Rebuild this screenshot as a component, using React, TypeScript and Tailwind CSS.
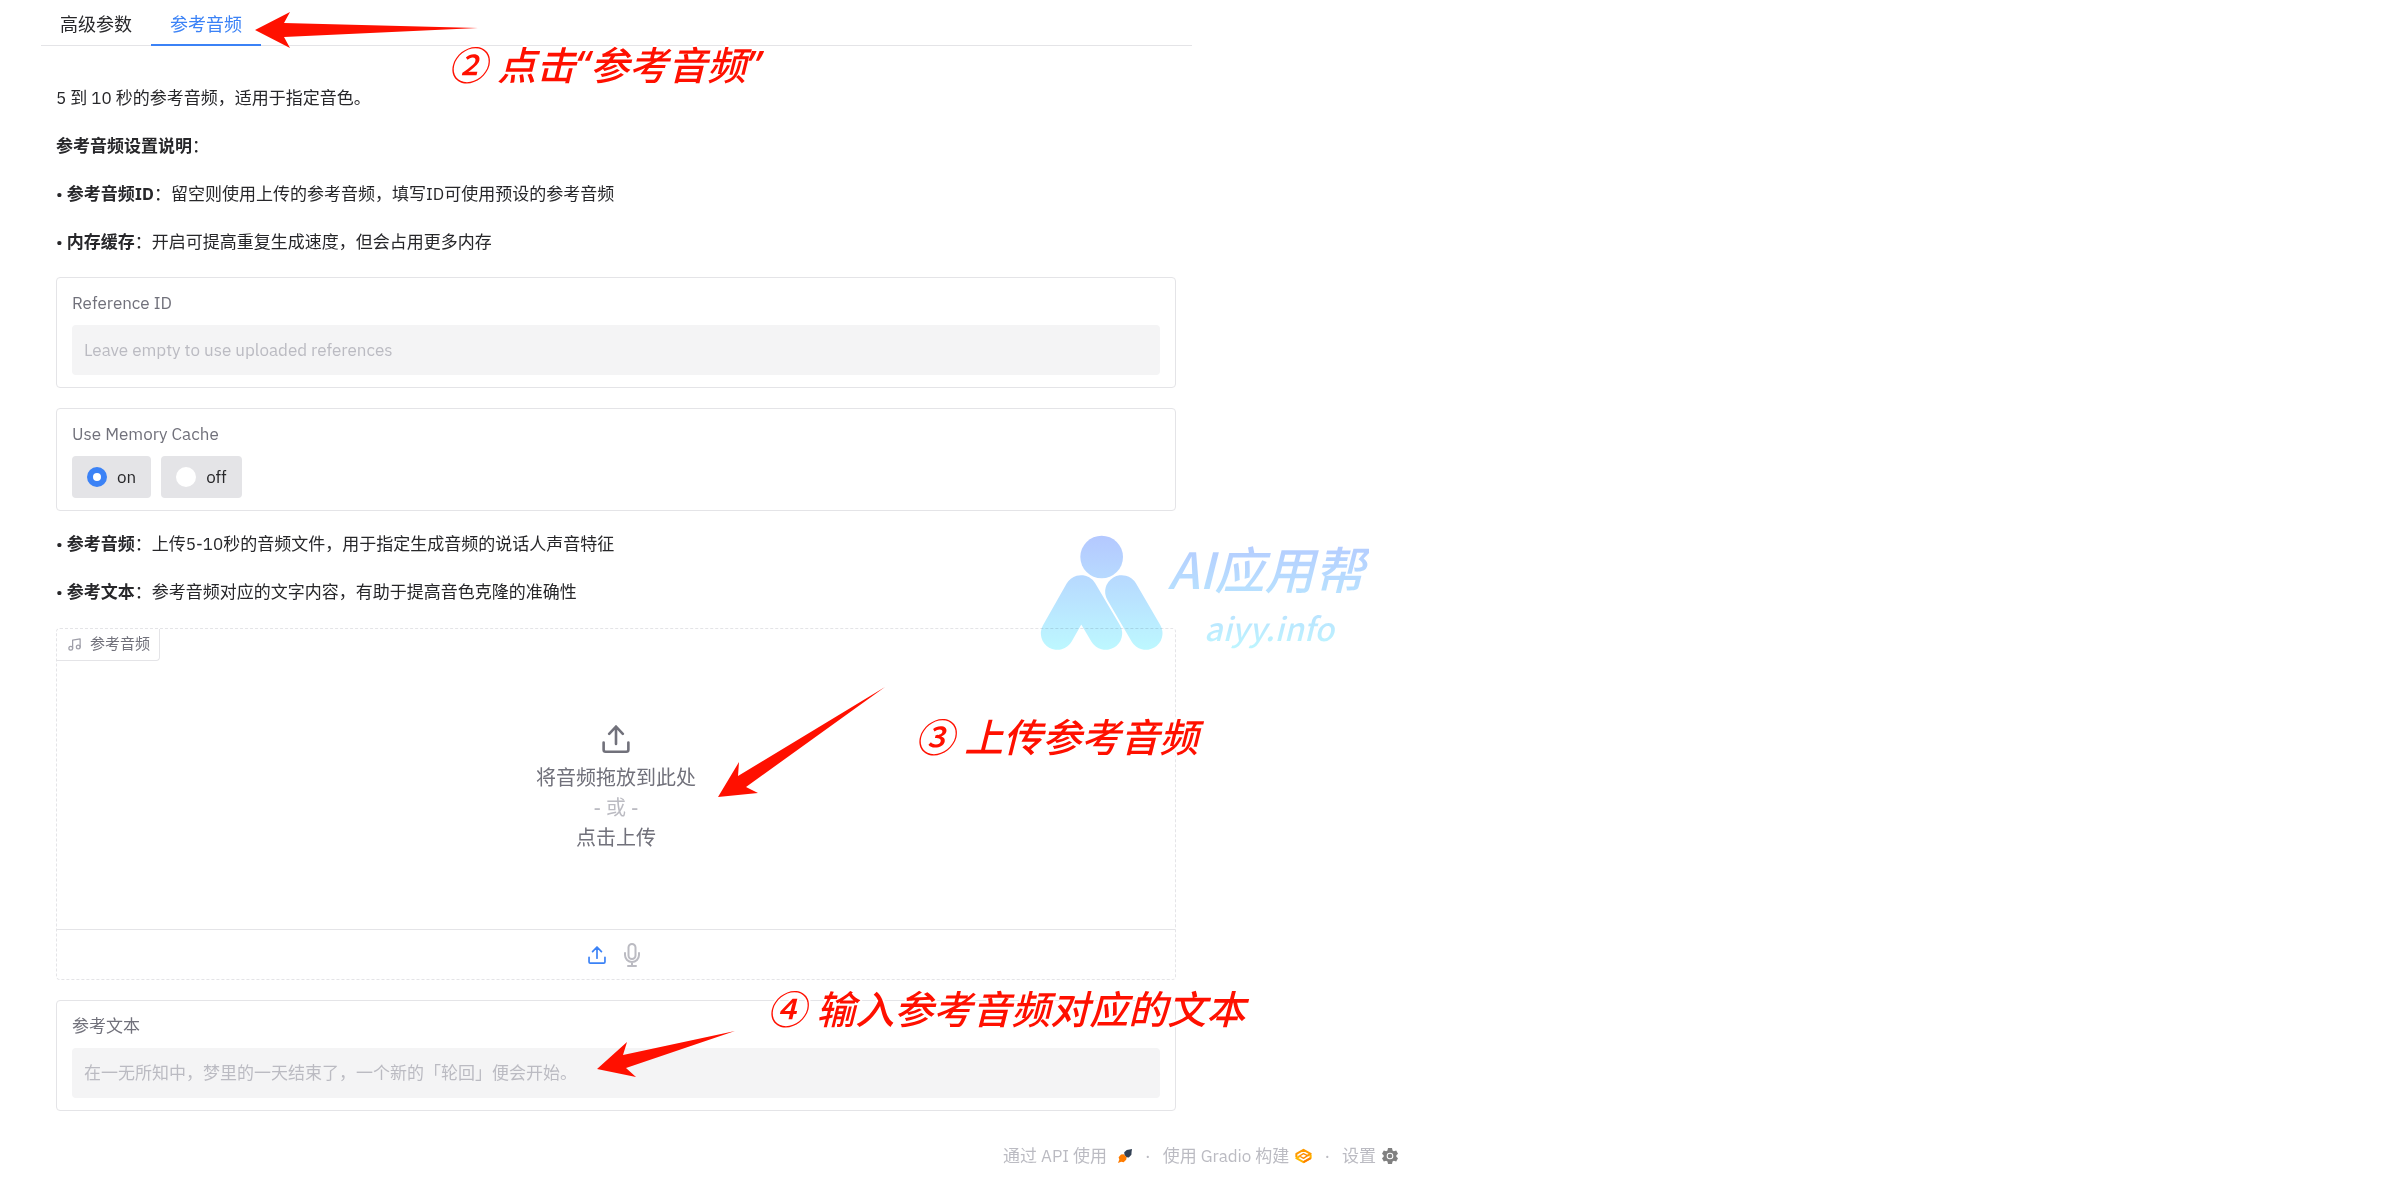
import { useState } from "react";
import type { ReactNode } from "react";

function UploadIcon({ className }: { className: string }) {
  return (
    <svg className={className} viewBox="0 0 84 86" fill="none" stroke="currentColor" strokeWidth="8" strokeLinecap="round" strokeLinejoin="round" aria-hidden="true">
      <path d="M4 54v22a6 6 0 0 0 6 6h64a6 6 0 0 0 6-6V54" />
      <path d="M42 5v53M21 27 42 5l21 22" />
    </svg>
  );
}

function MicIcon({ className }: { className: string }) {
  return (
    <svg className={className} viewBox="0 0 24 24" fill="none" stroke="currentColor" strokeWidth="2" strokeLinecap="round" strokeLinejoin="round" aria-hidden="true">
      <path d="M12 1a3.500 3.500 0 0 0-3.500 3.500v8a3.500 3.500 0 0 0 7 0v-8A3.500 3.500 0 0 0 12 1z" />
      <path d="M19 10v2a7 7 0 0 1-14 0v-2M12 19v4M8 23h8" />
    </svg>
  );
}

function MusicIcon() {
  return (
    <svg className="h-[15px] w-[15px] text-zinc-400" viewBox="0 0 24 24" fill="none" stroke="currentColor" strokeWidth="2" strokeLinecap="round" strokeLinejoin="round" aria-hidden="true">
      <path d="M9 18V5l12-2v13" />
      <circle cx="6" cy="18" r="3" />
      <circle cx="18" cy="16" r="3" />
    </svg>
  );
}

function RocketIcon() {
  return (
    <svg className="h-4 w-4" viewBox="0 0 16 16" aria-hidden="true">
      <path d="M15 1c-.9 0-1.700.2-2.400.6L9.800 2 7.200 4.300 7.500 7l2 2.200 2.300.2 2.600-2.600.2-3z" fill="#334155" />
      <path d="M6.600 6.200 4 6.400 1.600 9.200l.7 2.200L1 15l3.200-1.200 2.400.4 2.600-2.400.4-2.600z" fill="#ff7c00" />
    </svg>
  );
}

function GradioIcon() {
  return (
    <svg className="h-4 w-[17px]" viewBox="0 0 50 44" fill="none" strokeLinejoin="round" aria-hidden="true">
      <path d="M4 25V16L25 4l21 12-9 5" stroke="#ff9a00" strokeWidth="6" />
      <path d="M46 19v9L25 40 4 28l9-5" stroke="#ffb800" strokeWidth="6" />
      <path d="M37 21 25 15l-12 7 12 7z" stroke="#ff8c00" strokeWidth="4" />
      <path d="M46 28 25 40" stroke="#ff7c00" strokeWidth="6" />
    </svg>
  );
}

function GearIcon() {
  return (
    <svg className="h-4 w-4" viewBox="0 0 24 24" fill="#808080" fillRule="evenodd" aria-hidden="true">
      <path d="M9 0h6l.8 3.600 2 1.200L21.300 3.700 24 8.600 21.500 11v2l2.500 2.400-2.700 4.900-3.500-1.100-2 1.200L15 24H9l-.8-3.600-2-1.200-3.500 1.100L0 15.400 2.500 13v-2L0 8.600l2.700-4.900 3.500 1.100 2-1.200zM12 7a5 5 0 1 0 0 10 5 5 0 0 0 0-10z" />
      <circle cx="12" cy="12" r="3.500" />
    </svg>
  );
}

function Card({ children }: { children: ReactNode }) {
  return <div className="rounded border border-zinc-200 bg-white px-[15px] pt-[15px] pb-3">{children}</div>;
}

function TextField({ id, label, placeholder }: { id: string; label: string; placeholder: string }) {
  return (
    <Card>
      <label htmlFor={id} className="mb-3 block leading-5 text-zinc-500">{label}</label>
      <input id={id} type="text" placeholder={placeholder} className="block h-[50px] w-full rounded bg-[#f4f4f5] px-3 text-zinc-800 outline-none placeholder:text-[#bbbbc2]" />
    </Card>
  );
}

function CacheOption({ value, checked, onSelect }: { value: string; checked: boolean; onSelect: () => void }) {
  return (
    <label className="flex h-[42px] items-center gap-[10px] rounded bg-zinc-200 px-[15px] text-zinc-800">
      <input type="radio" name="memory-cache" value={value} checked={checked} onChange={onSelect} className="h-5 w-5 appearance-none rounded-full border-0 bg-white checked:border-[6px] checked:border-[#3b82f6]" />
      <span className="leading-5">{value}</span>
    </label>
  );
}

function Note({ children }: { children: ReactNode }) {
  return <p className="leading-[26px] text-zinc-800">{children}</p>;
}

function Annotation({ className, children }: { className: string; children: ReactNode }) {
  return (
    <p className={`pointer-events-none absolute font-['Noto_Sans','Noto_Sans_CJK_SC',sans-serif] text-[39px] leading-[50px] font-medium whitespace-nowrap text-[#ff1000] italic [text-shadow:2px_0_#fff,-2px_0_#fff,0_2px_#fff,0_-2px_#fff] ${className}`}>
      {children}
    </p>
  );
}

function Watermark() {
  return (
    <div className="pointer-events-none absolute top-[534px] left-[1040px] flex mix-blend-multiply">
      <svg className="h-[116px] w-[124px]" viewBox="0 0 372 348" fill="none" aria-hidden="true">
        <defs>
          <linearGradient id="mark" gradientUnits="userSpaceOnUse" x1="0" y1="6" x2="0" y2="348">
            <stop offset="0" stopColor="#b4c8ff" />
            <stop offset="1" stopColor="#bdf8ff" />
          </linearGradient>
        </defs>
        <circle cx="185" cy="69" r="64" fill="url(#mark)" />
        <path d="M52 298 123 173 197 298M245 173 318 298" stroke="url(#mark)" strokeWidth="99" strokeLinecap="round" strokeLinejoin="round" />
      </svg>
      <div className="flex flex-col font-['Noto_Sans_CJK_SC',sans-serif] font-medium italic">
        <span className="bg-linear-to-b from-[#b4c8ff] to-[#b8e4ff] bg-clip-text px-1 text-[50px] leading-[66px] text-transparent">AI应用帮</span>
        <span className="bg-linear-to-b from-[#b8dcff] to-[#bdf8ff] bg-clip-text pl-10 text-[32px] leading-[54px] text-transparent">aiyy.info</span>
      </div>
    </div>
  );
}

export default function App() {
  const [cache, setCache] = useState("on");
  return (
    <div className="relative overflow-hidden bg-white font-['IBM_Plex_Sans','Noto_Sans_CJK_SC',sans-serif] text-[17px] text-zinc-800">
      <main className="grid grid-cols-2 gap-[17px] px-[41px]">
        <section>
          <div role="tablist" className="flex h-[46px] border-b border-zinc-200 text-[18px]">
            <button role="tab" aria-selected="false" className="w-[110px] pt-1">高级参数</button>
            <button role="tab" aria-selected="true" className="-mb-px w-[110px] border-b-2 border-[#3b82f6] pt-1 text-[#3b82f6]">参考音频</button>
          </div>
          <div className="flex flex-col gap-5 pt-[39px] pr-4 pl-[15px]">
            <div className="flex flex-col gap-[22px] pb-[2px]">
              <Note>5 到 10 秒的参考音频，适用于指定音色。</Note>
              <Note><strong>参考音频设置说明</strong>：</Note>
              <Note>• <strong>参考音频ID</strong>：留空则使用上传的参考音频，填写ID可使用预设的参考音频</Note>
              <Note>• <strong>内存缓存</strong>：开启可提高重复生成速度，但会占用更多内存</Note>
            </div>
            <TextField id="reference-id" label="Reference ID" placeholder="Leave empty to use uploaded references" />
            <Card>
              <fieldset>
                <legend className="mb-3 leading-5 text-zinc-500">Use Memory Cache</legend>
                <div className="flex gap-[10px]">
                  <CacheOption value="on" checked={cache === "on"} onSelect={() => setCache("on")} />
                  <CacheOption value="off" checked={cache === "off"} onSelect={() => setCache("off")} />
                </div>
              </fieldset>
            </Card>
            <div className="flex flex-col gap-[22px] pb-[3px]">
              <Note>• <strong>参考音频</strong>：上传5-10秒的音频文件，用于指定生成音频的说话人声音特征</Note>
              <Note>• <strong>参考文本</strong>：参考音频对应的文字内容，有助于提高音色克隆的准确性</Note>
            </div>
            <div className="relative flex flex-col rounded border border-dashed border-zinc-200">
              <div className="absolute top-0 left-0 flex h-8 items-center gap-2 rounded-br border-r border-b border-zinc-200 pr-[9px] pl-[10px] text-[15px] text-zinc-500">
                <MusicIcon />
                <span>参考音频</span>
              </div>
              <button className="flex h-[300px] flex-col items-center justify-center pt-5 text-[20px] leading-[30px] text-zinc-500">
                <UploadIcon className="mb-[10px] h-7 w-7" />
                <span>将音频拖放到此处</span>
                <span className="text-[#bbbbc2]">- 或 -</span>
                <span>点击上传</span>
              </button>
              <div className="flex h-[50px] items-center justify-center gap-[14px] border-t border-zinc-200">
                <button aria-label="上传文件" className="text-[#3b82f6]"><UploadIcon className="h-[18px] w-[18px]" /></button>
                <button aria-label="麦克风" className="text-[#bbbbc2]"><MicIcon className="h-6 w-6" /></button>
              </div>
            </div>
            <TextField id="reference-text" label="参考文本" placeholder="在一无所知中，梦里的一天结束了，一个新的「轮回」便会开始。" />
          </div>
        </section>
      </main>
      <footer className="flex items-center justify-center gap-3 pt-8 pb-5 leading-[26px] text-[#bbbbc2]">
        <a href="#api" className="flex items-center gap-[10px]">通过 API 使用 <RocketIcon /></a>
        <span>·</span>
        <a href="#gradio" className="flex items-center gap-[6px]">使用 Gradio 构建 <GradioIcon /></a>
        <span>·</span>
        <a href="#settings" className="flex items-center gap-[6px]">设置 <GearIcon /></a>
      </footer>

      <Watermark />
      <svg className="pointer-events-none absolute top-0 left-0 h-[1100px] w-[900px]" viewBox="0 0 900 1100" fill="#ff1000" aria-hidden="true">
        <path d="M255 30 290 12 284 23 478 28 284 37 290 48z" />
        <path d="M718 797 739 762 738 776 885 687 746 787 758 793z" />
        <path d="M597 1069 627 1042 623 1055 735 1031 626 1068 636 1077z" />
      </svg>
      <Annotation className="top-[40px] left-[448px]">② 点击“参考音频”</Annotation>
      <Annotation className="top-[712px] left-[915px]">③ 上传参考音频</Annotation>
      <Annotation className="top-[984px] left-[767px]">④ 输入参考音频对应的文本</Annotation>
    </div>
  );
}
